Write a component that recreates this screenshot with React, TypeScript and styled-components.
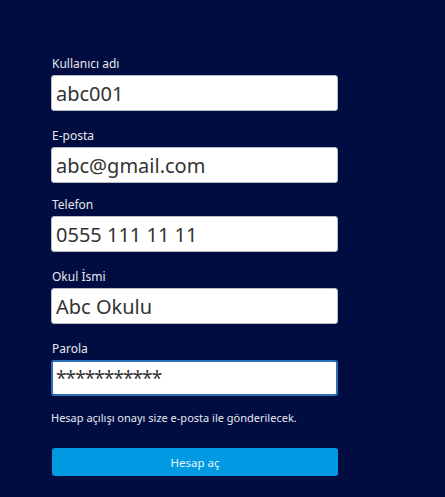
import React from "react";
import styled, { createGlobalStyle } from "styled-components";

const Global = createGlobalStyle`
  html, body { margin: 0; padding: 0; background: #010d40; }
  body { font-family: "Noto Sans", "Open Sans", sans-serif; }
  * { box-sizing: border-box; }
`;

const Page = styled.div`
  min-height: 497px;
  background: #010d40;
  padding: 56px 0 0 51px;
`;

const Form = styled.form`
  width: 287px;
  display: flex;
  flex-direction: column;
`;

const Field = styled.div<{ $after: number }>`
  display: flex;
  flex-direction: column;
  margin-bottom: ${(p) => p.$after}px;
`;

const Label = styled.label`
  font-size: 12px;
  line-height: 16px;
  color: #e6e8ef;
  padding-left: 1px;
  margin-bottom: 3px;
`;

const Input = styled.input<{ $focused?: boolean }>`
  height: 36px;
  width: 100%;
  border: 1px solid #b9bcc6;
  border-radius: 3px;
  background: #fff;
  padding: 0 4px;
  font-family: inherit;
  font-size: 20px;
  color: #333;
  outline: none;
  ${(p) =>
    p.$focused &&
    `border: 2px solid #2d6fb8; padding: 0 3px; caret-color: #000; font-size: 19px; letter-spacing: -0.9px;`}
`;

const Note = styled.p`
  margin: 14px 0 0 0;
  font-size: 11px;
  line-height: 16px;
  color: #e6e8ef;
`;

const Button = styled.button`
  margin-top: 22px;
  height: 28px;
  width: 286px;
  margin-left: 1px;
  border: none;
  border-radius: 3px;
  background: #0199e2;
  color: #e8f4fc;
  font-family: inherit;
  font-size: 11.5px;
  cursor: pointer;
`;

const fields = [
  { label: "Kullanıcı adı", value: "abc001", after: 17 },
  { label: "E-posta", value: "abc@gmail.com", after: 14 },
  { label: "Telefon", value: "0555 111 11 11", after: 17 },
  { label: "Okul İsmi", value: "Abc Okulu", after: 17 },
];

export default function App() {
  const ref = React.useRef<HTMLInputElement>(null);
  React.useEffect(() => {
    ref.current?.focus();
  }, []);
  return (
    <Page>
      <Global />
      <Form onSubmit={(e) => e.preventDefault()}>
        {fields.map((f) => (
          <Field key={f.label} $after={f.after}>
            <Label>{f.label}</Label>
            <Input defaultValue={f.value} />
          </Field>
        ))}
        <Field $after={0}>
          <Label>Parola</Label>
          <Input ref={ref} type="text" $focused defaultValue="***********" />
        </Field>
        <Note>Hesap açılışı onayı size e-posta ile gönderilecek.</Note>
        <Button type="submit">Hesap aç</Button>
      </Form>
    </Page>
  );
}
